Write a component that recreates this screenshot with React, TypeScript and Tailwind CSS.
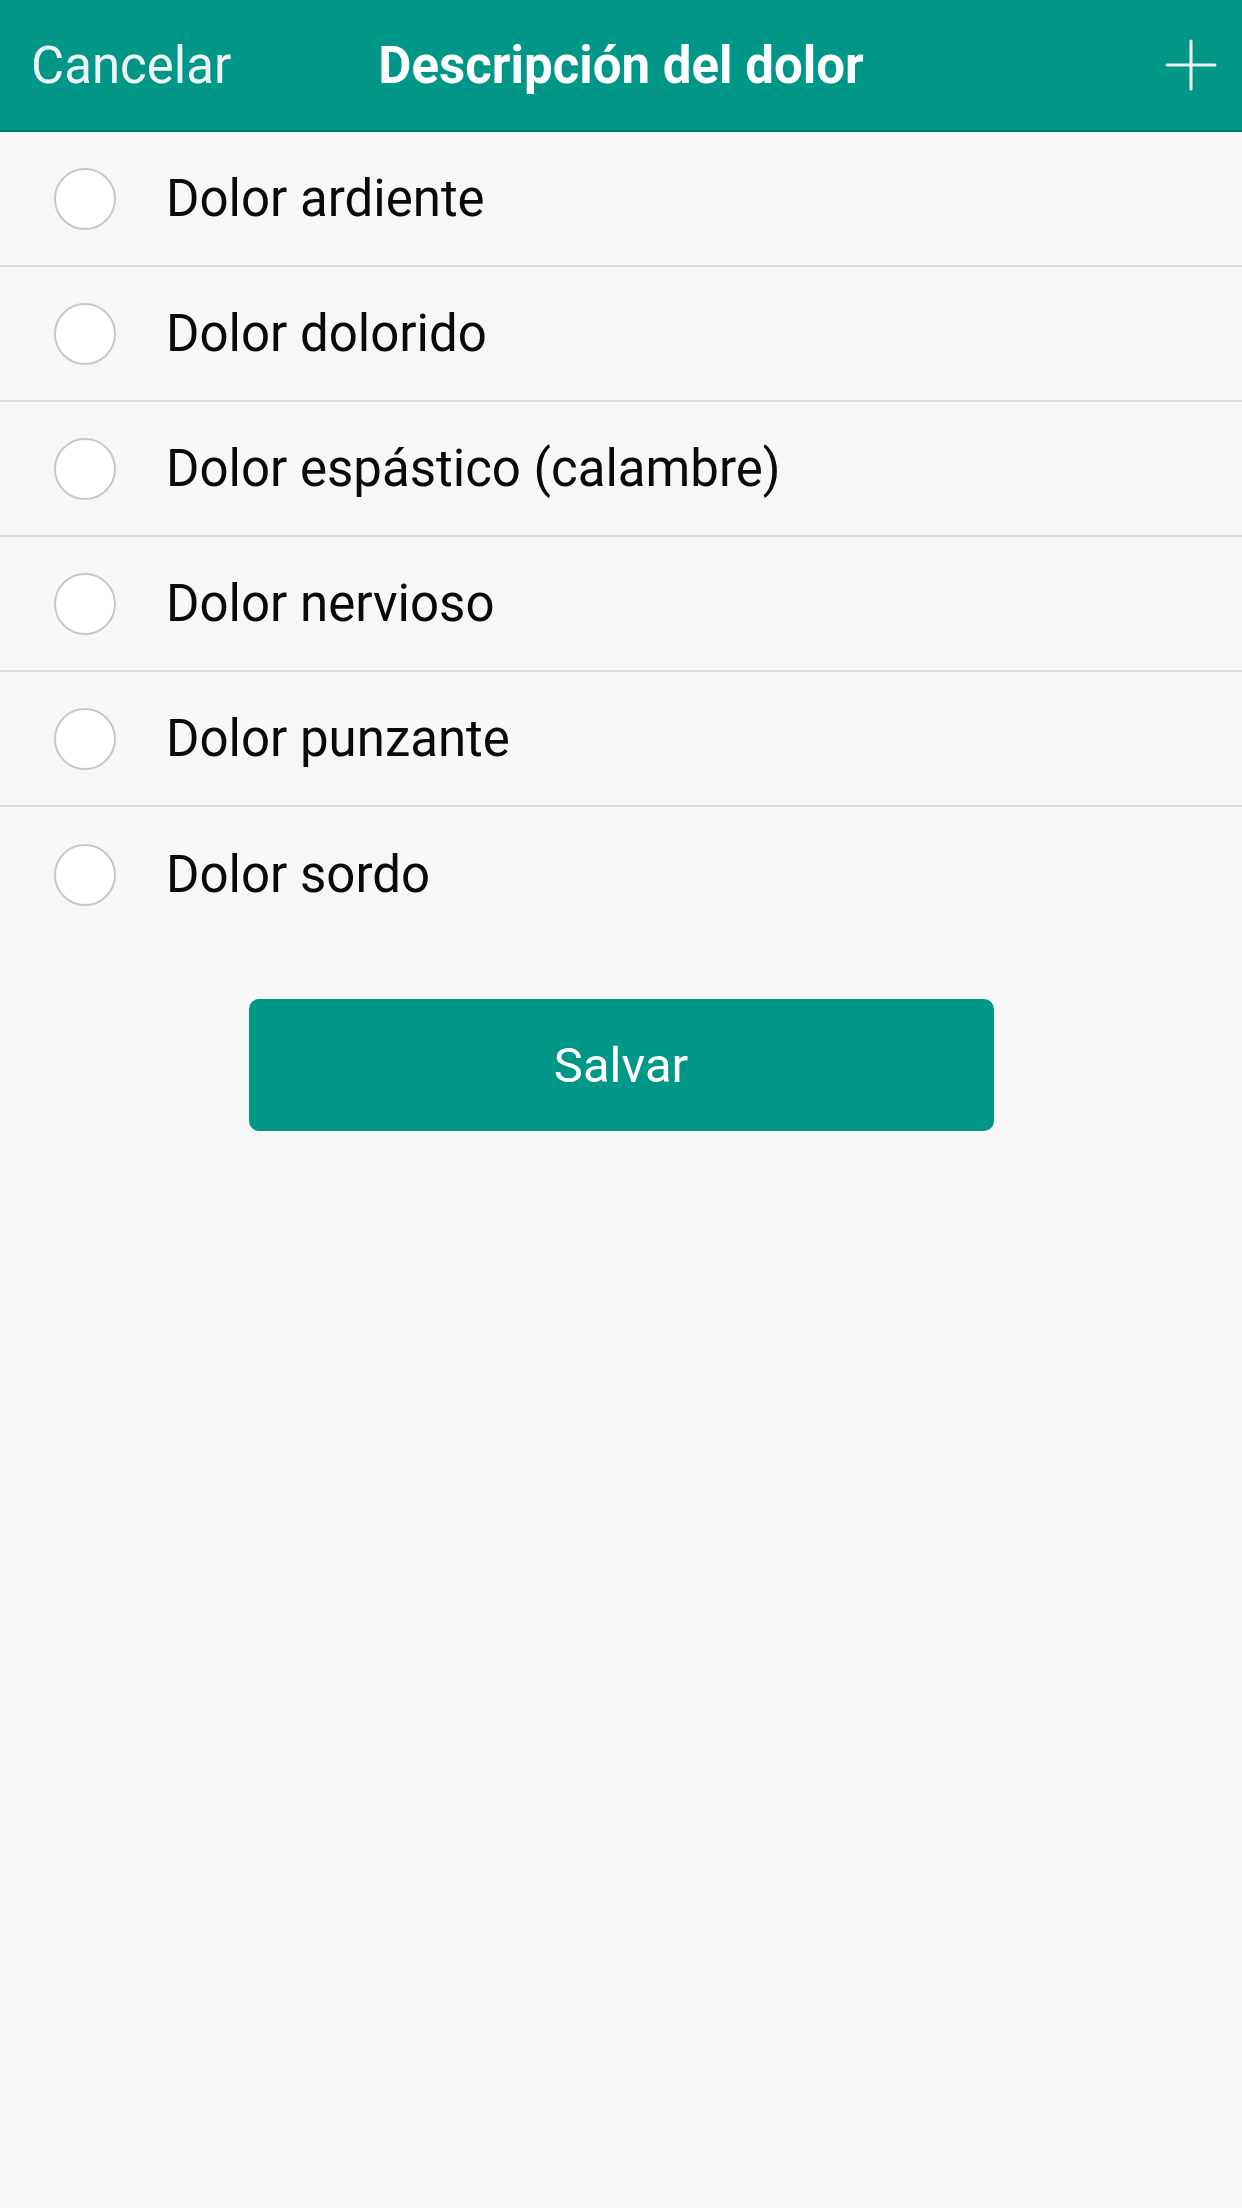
import { Plus } from 'lucide-react';

const options = [
  'Dolor ardiente',
  'Dolor dolorido',
  'Dolor espástico (calambre)',
  'Dolor nervioso',
  'Dolor punzante',
  'Dolor sordo',
];

export default function App() {
  return (
    <div
      className="w-[1242px] h-[2208px] bg-[#f7f7f7] flex flex-col"
      style={{ fontFamily: 'Roboto, "Liberation Sans", sans-serif' }}
    >
      {/* Barra superiore */}
      <div className="h-[132px] bg-[#009688] border-b-2 border-[#00776b] flex items-center px-[31px] relative">
        <span className="text-[51px] text-[#eef3f2] leading-none">Cancelar</span>
        <span className="absolute left-0 right-0 text-center text-[51px] font-bold text-white leading-none pointer-events-none">
          Descripción del dolor
        </span>
        <Plus className="ml-auto w-[82px] h-[82px] text-[#eeeeee] -mr-[21px]" strokeWidth={0.9} />
      </div>

      {/* Lista */}
      <div className="flex flex-col">
        {options.map((label, i) => (
          <div
            key={label}
            className={
              i < options.length - 1
                ? 'h-[135px] flex items-center border-b-2 border-[#dcdcdc]'
                : 'h-[135px] flex items-center'
            }
          >
            <div className="ml-[54px] w-[62px] h-[62px] rounded-full bg-white border-2 border-[#c8c8c8]" />
            <span className="ml-[50px] text-[51px] text-[#0a0a0a] leading-none">{label}</span>
          </div>
        ))}
      </div>

      <div className="flex justify-center mt-[57px]">
        <button className="w-[745px] h-[132px] rounded-[10px] bg-[#009688] text-white text-[49px] leading-none">
          Salvar
        </button>
      </div>
    </div>
  );
}
